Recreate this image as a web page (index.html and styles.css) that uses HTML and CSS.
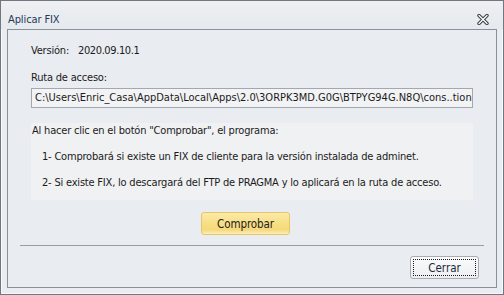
FILE: index.html
```html
<!DOCTYPE html>
<html>
<head>
<meta charset="utf-8">
<link rel="stylesheet" href="styles.css">
</head>
<body>
<div class="window">
  <div class="titlebar">
    <span class="title">Aplicar FIX</span>
    <svg class="close" width="12" height="11" viewBox="0 0 12 11">
      <path d="M2 1.5 L10 9.5 M10 1.5 L2 9.5" stroke="#3c4048" stroke-width="3.4" stroke-linecap="round"/>
      <path d="M2 1.5 L10 9.5 M10 1.5 L2 9.5" stroke="#ffffff" stroke-width="1.3" stroke-linecap="round"/>
    </svg>
  </div>
  <div class="panel">
    <div class="content">
      <div class="line version">Versión:<span class="vnum">2020.09.10.1</span></div>
      <div class="line label">Ruta de acceso:</div>
      <div class="pathbox">C:\Users\Enric_Casa\AppData\Local\Apps\2.0\3ORPK3MD.G0G\BTPYG94G.N8Q\cons..tion</div>
      <div class="info">
        <div class="line">Al hacer clic en el botón "Comprobar", el programa:</div>
        <div class="line step">1- Comprobará si existe un FIX de cliente para la versión instalada de adminet.</div>
        <div class="line step">2- Si existe FIX, lo descargará del FTP de PRAGMA y lo aplicará en la ruta de acceso.</div>
      </div>
      <div class="btnrow"><button class="btn-yellow">Comprobar</button></div>
    </div>
    <div class="separator"></div>
    <div class="footer"><button class="btn-close"><span class="focus">Cerrar</span></button></div>
  </div>
</div>
</body>
</html>
```
FILE: styles.css
```css
* { box-sizing: border-box; }
html, body { margin: 0; padding: 0; }
body {
  width: 504px; height: 295px; overflow: hidden;
  font-family: "DejaVu Sans Condensed", "DejaVu Sans", sans-serif;
  font-size: 11px;
  color: #1b1b1b;
  background: #e9ecf0;
}
.window {
  width: 504px; height: 295px;
  border: 1px solid #6f7780;
  box-shadow: inset 1px 1px 0 #f7f8fa, inset -1px -1px 0 #f7f8fa;
  background: #e9ecf0;
  padding: 0 6px 6px 6px;
  display: flex; flex-direction: column;
}
.titlebar {
  height: 28px;
  display: flex; align-items: center; justify-content: space-between;
  background: linear-gradient(#eef0f3, #e6e9ed);
  margin: 0 -6px; padding-left: 7px; padding-right: 14px;
}
.title {
  font-family: "DejaVu Sans Condensed", "DejaVu Sans", sans-serif;
  font-size: 11px;
  letter-spacing: -0.1px;
  color: #1e395b;
  margin-top: 8px;
}
.close { margin-top: 8px; }
.panel {
  flex: 1;
  border: 1px solid #8a9097;
  background: #e9ecf0;
  display: flex; flex-direction: column;
}
.content { padding: 14px 23px 0 23px; }
.line {
  font-family: "DejaVu Sans Condensed", "DejaVu Sans", sans-serif;
  font-size: 11px;
  line-height: 14px;
  letter-spacing: -0.2px;
  white-space: nowrap;
}
.vnum { margin-left: 9px; letter-spacing: -0.4px; }
.label { margin-top: 13px; }
.pathbox {
  margin-top: 3px;
  height: 20px;
  border: 1px solid #a4a8ae;
  background: #f2f3f5;
  padding: 2px 3px;
  font-family: "DejaVu Sans Condensed", "DejaVu Sans", sans-serif;
  font-size: 11px;
  line-height: 14px;
  white-space: nowrap;
  overflow: hidden;
}
.info {
  margin-top: 15px;
  height: 77px;
  background: #f0f1f3;
  padding: 1px 1px 0 1px;
  display: flex; flex-direction: column; gap: 12px;
}
.step { padding-left: 10px; }
.btnrow { margin-top: 12px; padding-left: 170px; }
.btn-yellow {
  width: 89px; height: 23px;
  border: 1px solid #e6c766;
  border-radius: 3px;
  background: linear-gradient(#fbeaa8 0%, #f8de84 50%, #f6d978 80%, #fbeec0 100%);
  font-family: "DejaVu Sans Condensed", "DejaVu Sans", sans-serif;
  font-size: 11.5px;
  letter-spacing: -0.1px;
  color: #222;
  padding: 0;
}
.separator {
  margin: 10px 12px 0 12px;
  height: 1px;
  background: #979ca3;
}
.footer {
  display: flex; justify-content: flex-end;
  padding: 10px 17px 0 0;
}
.btn-close {
  width: 69px; height: 23px;
  border: 1px solid #a7acb3;
  border-radius: 3px;
  background: linear-gradient(#fbfbfc, #eceef1);
  padding: 2px;
  display: flex;
}
.focus {
  flex: 1;
  border: 1px dotted #1a1a1a;
  display: flex; align-items: center; justify-content: center;
  font-family: "DejaVu Sans Condensed", "DejaVu Sans", sans-serif;
  font-size: 11.5px;
  color: #1e2a3a;
}
```
